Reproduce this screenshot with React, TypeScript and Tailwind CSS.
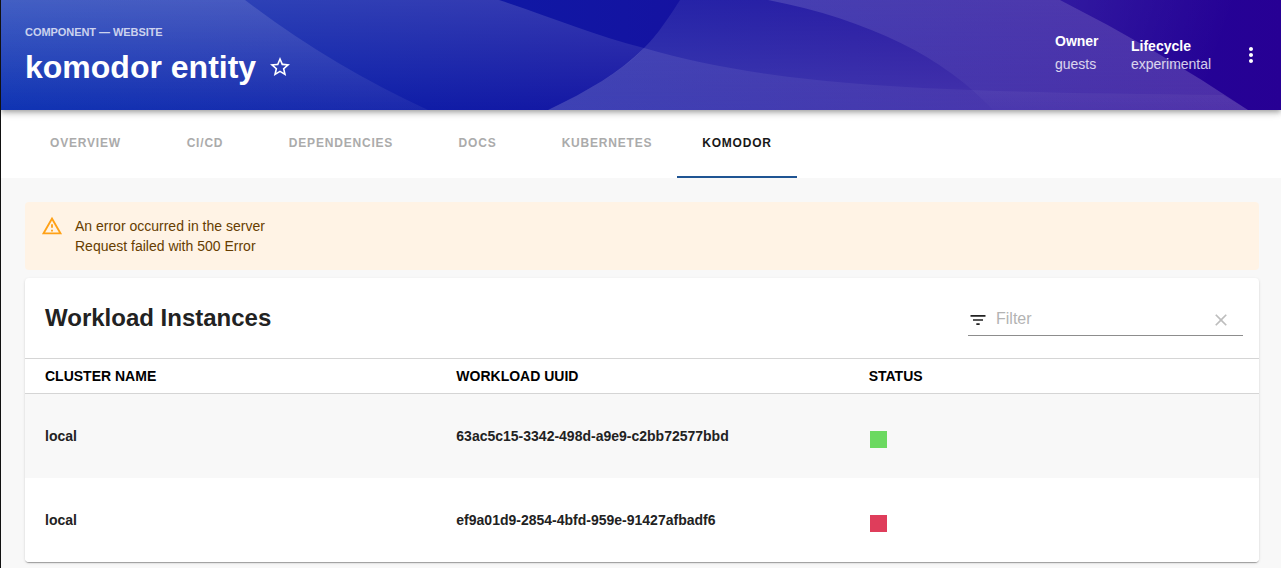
import React from "react";

const tabs = [
  { label: "Overview", width: "w-[121px]" },
  { label: "CI/CD", width: "w-[118px]" },
  { label: "Dependencies", width: "w-[154px]" },
  { label: "Docs", width: "w-[119px]" },
  { label: "Kubernetes", width: "w-[140px]" },
  { label: "Komodor", width: "w-[120px]", active: true },
];

const rows = [
  { cluster: "local", uuid: "63ac5c15-3342-498d-a9e9-c2bb72577bbd", color: "bg-[#6bd960]", row: "bg-[#f8f8f8]" },
  { cluster: "local", uuid: "ef9a01d9-2854-4bfd-959e-91427afbadf6", color: "bg-[#df3d5b]", row: "bg-white" },
];

function HeaderWaves() {
  return (
    <svg className="absolute inset-0 h-full w-full" viewBox="1 0 1280 110" preserveAspectRatio="none">
      <defs>
        <linearGradient id="base" x1="0" x2="1" y1="0" y2="0">
          <stop offset="0" stopColor="#0027af" />
          <stop offset="1" stopColor="#270094" />
        </linearGradient>
        <linearGradient id="a" x1="0" x2="0" y1="0" y2="110" gradientUnits="userSpaceOnUse">
          <stop offset="0" stopColor="#fff" stopOpacity="0.13" />
          <stop offset="1" stopColor="#fff" stopOpacity="0.05" />
        </linearGradient>
        <linearGradient id="b" x1="0" x2="0" y1="0" y2="110" gradientUnits="userSpaceOnUse">
          <stop offset="0" stopColor="#fff" stopOpacity="0.15" />
          <stop offset="1" stopColor="#fff" stopOpacity="0.01" />
        </linearGradient>
        <linearGradient id="c" x1="0" x2="0" y1="0" y2="110" gradientUnits="userSpaceOnUse">
          <stop offset="0" stopColor="#fff" stopOpacity="0.07" />
          <stop offset="1" stopColor="#fff" stopOpacity="0.17" />
        </linearGradient>
        <linearGradient id="bc" x1="0" x2="0" y1="48" y2="110" gradientUnits="userSpaceOnUse">
          <stop offset="0" stopColor="#fff" stopOpacity="0.1" />
          <stop offset="1" stopColor="#fff" stopOpacity="0.02" />
        </linearGradient>
        <linearGradient id="d" x1="0" x2="0" y1="0" y2="110" gradientUnits="userSpaceOnUse">
          <stop offset="0" stopColor="#fff" stopOpacity="0.14" />
          <stop offset="1" stopColor="#fff" stopOpacity="0.01" />
        </linearGradient>
        <linearGradient id="e" x1="1070" x2="1220" y1="0" y2="50" gradientUnits="userSpaceOnUse">
          <stop offset="0" stopColor="#fff" stopOpacity="0.07" />
          <stop offset="1" stopColor="#fff" stopOpacity="0" />
        </linearGradient>
      </defs>
      <rect x="0" width="1281" height="110" fill="url(#base)" />
      <path fill="url(#a)" d="M0 0H245Q330 65 428 110H0Z" />
      <path fill="url(#b)" d="M0 0H499C550 17 596 36 644 48C624 70 590 90 548 110H0Z" />
      <path fill="url(#c)" d="M680 0C662 28 655 37 644 48C620 72 588 91 548 110H1248Q1157 49 1060 0Z" />
      <path fill="url(#bc)" d="M644 48C770 84 900 92 1223 95L1248 110H548C588 91 620 72 644 48Z" />
      <path fill="url(#d)" d="M768 0C870 20 945 58 993 110H1248Q1157 49 1060 0Z" />
      <path fill="url(#e)" d="M1060 0H1281V110H1248Q1157 49 1060 0Z" />
    </svg>
  );
}

function Header() {
  return (
    <header className="relative z-10 h-[110px] text-white shadow-[0_2px_4px_-1px_rgba(0,0,0,0.2),0_4px_5px_0_rgba(0,0,0,0.14),0_1px_10px_0_rgba(0,0,0,0.12)]">
      <HeaderWaves />
      <div className="relative flex h-full justify-between pl-6 pr-[18px]">
        <div className="pt-[25px]">
          <p className="text-[11px] font-bold leading-[15px] tracking-[-0.06px] text-white/75">COMPONENT — WEBSITE</p>
          <div className="mt-[7px] flex items-center">
            <h1 className="text-[32px] font-bold leading-[40px]">komodor entity</h1>
            <svg className="ml-3 h-6 w-6" viewBox="0 0 24 24" fill="currentColor">
              <path d="M22 9.24l-7.19-.62L12 2 9.19 8.63 2 9.24l5.46 4.73L5.82 21 12 17.27 18.18 21l-1.63-7.03L22 9.24zM12 15.4l-3.76 2.27 1-4.28-3.32-2.88 4.38-.38L12 6.1l1.71 4.04 4.38.38-3.32 2.88 1 4.28L12 15.4z" />
            </svg>
          </div>
        </div>
        <div className="flex text-sm">
          <div className="w-[76px] pt-[31px]">
            <p className="font-bold leading-5">Owner</p>
            <p className="mt-[3px] leading-5 text-white/80">guests</p>
          </div>
          <div className="w-[108px] pt-9">
            <p className="font-bold leading-5">Lifecycle</p>
            <p className="-mt-0.5 leading-5 text-white/80">experimental</p>
          </div>
          <svg className="mt-[43px] h-6 w-6" viewBox="0 0 24 24" fill="currentColor">
            <path d="M12 8c1.1 0 2-.9 2-2s-.9-2-2-2-2 .9-2 2 .9 2 2 2zm0 2c-1.1 0-2 .9-2 2s.9 2 2 2 2-.9 2-2-.9-2-2-2zm0 6c-1.1 0-2 .9-2 2s.9 2 2 2 2-.9 2-2-.9-2-2-2z" />
          </svg>
        </div>
      </div>
    </header>
  );
}

export default function App() {
  return (
    <div className="h-[568px] w-full overflow-hidden border-l border-[#111] bg-[#f8f8f8] font-['Liberation_Sans',Arial,sans-serif] text-[#222]">
      <Header />
      <nav className="flex h-[68px] bg-white pl-6">
        {tabs.map((t) => (
          <div
            key={t.label}
            className={`${t.width} shrink-0 border-b-2 pt-[25px] text-center text-xs font-bold uppercase leading-4 tracking-[0.8px] ${
              t.active ? "border-[#1f5493] text-[#181818]" : "border-transparent text-[#ababab]"
            }`}
          >
            {t.label}
          </div>
        ))}
      </nav>
      <main className="pl-6 pr-[22px] pt-6">
        <div className="flex h-[68px] rounded bg-[#fff3e5] pl-4 pt-3.5 text-sm leading-5 text-[#663d00]">
          <svg className="-mt-px mr-3 h-[22px] w-[22px]" viewBox="0 0 24 24" fill="#ffa117">
            <path d="M12 5.99L19.53 19H4.47L12 5.99M12 2L1 21h22L12 2zm1 14h-2v2h2v-2zm0-6h-2v4h2v-4z" />
          </svg>
          <div>
            <p>An error occurred in the server</p>
            <p>Request failed with 500 Error</p>
          </div>
        </div>
        <section className="mt-2 overflow-hidden rounded bg-white shadow-[0_2px_1px_-1px_rgba(0,0,0,0.2),0_1px_1px_0_rgba(0,0,0,0.14),0_1px_3px_0_rgba(0,0,0,0.12)]">
          <div className="flex h-20 justify-between pl-5 pr-4">
            <h2 className="pt-[25px] text-2xl font-bold leading-[30px]">Workload Instances</h2>
            <div className="mt-[25px] flex h-[33px] w-[275px] border-b border-[#8d8d8d]">
              <svg className="mt-[7px] h-5 w-5" viewBox="0 0 24 24" fill="#222">
                <path d="M10 18h4v-2h-4v2zM3 6v2h18V6H3zm3 7h12v-2H6v2z" />
              </svg>
              <span className="ml-2 flex-1 pt-1.5 text-base leading-5 text-[#b3b3b3]">Filter</span>
              <svg className="mr-3 mt-[7px] h-5 w-5" viewBox="0 0 24 24" fill="#bdbdbd">
                <path d="M19 6.41L17.59 5 12 10.59 6.41 5 5 6.41 10.59 12 5 17.59 6.41 19 12 13.41 17.59 19 19 17.59 13.41 12z" />
              </svg>
            </div>
          </div>
          <div className="grid h-9 grid-cols-3 border-y border-[#d5d5d5] text-sm font-bold leading-[34px] text-black">
            <span className="pl-5">CLUSTER NAME</span>
            <span className="pl-5">WORKLOAD UUID</span>
            <span className="pl-[21px]">STATUS</span>
          </div>
          {rows.map((r) => (
            <div key={r.uuid} className={`grid h-[84px] grid-cols-3 items-center text-sm font-bold ${r.row}`}>
              <span className="pl-5">{r.cluster}</span>
              <span className="pl-5">{r.uuid}</span>
              <span className="pl-[22px] pt-[7px]">
                <span className={`block h-[17px] w-[17px] ${r.color}`} />
              </span>
            </div>
          ))}
        </section>
      </main>
    </div>
  );
}
